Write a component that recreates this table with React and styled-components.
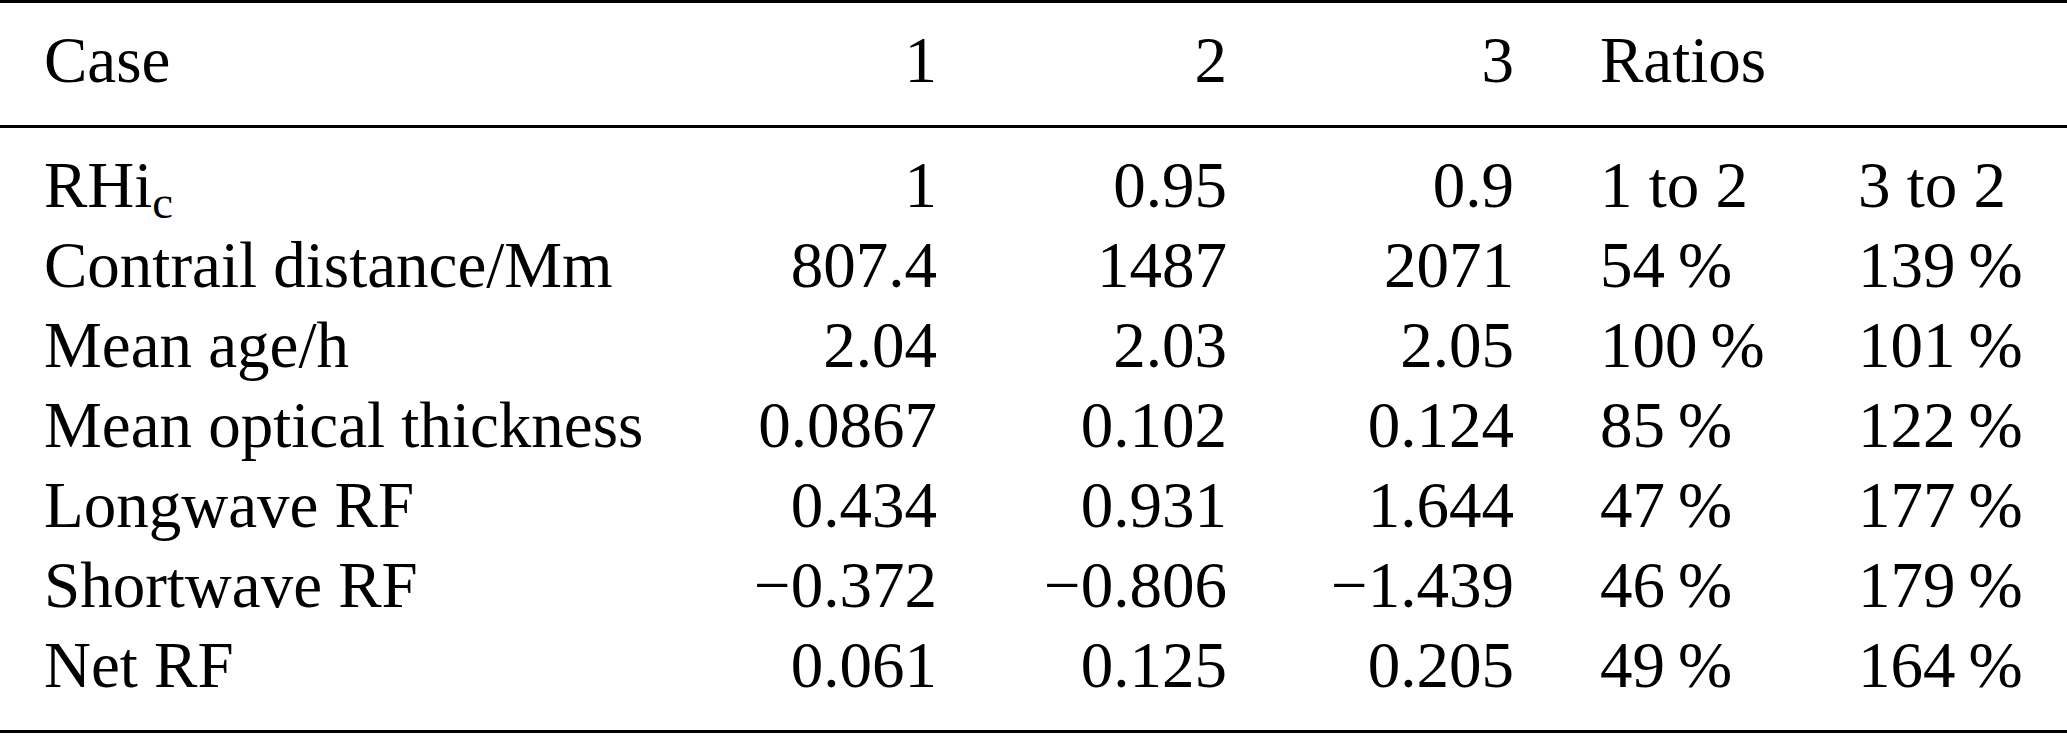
import React from "react";
import styled, { createGlobalStyle } from "styled-components";

const serif = `"Liberation Serif", "Times New Roman", serif`;

const GlobalStyle = createGlobalStyle`
  html, body {
    margin: 0;
    padding: 0;
    background: #fff;
  }
`;

const Table = styled.div`
  width: 2067px;
  height: 737px;
  font-family: ${serif};
  font-size: 65px;
  line-height: 80px;
  color: #000;
`;

const Rule = styled.div`
  height: 3px;
  background: #000;
`;

const Section = styled.div`
  padding: ${props => props.$pad};
`;

const Row = styled.div`
  display: grid;
  grid-template-columns: 700px 193px 290px 287px 344px 1fr;
  padding-left: 44px;
  white-space: nowrap;
`;

const Cell = styled.div`
  text-align: ${props => (props.$left ? "left" : "right")};
  padding-left: ${props => (props.$gap ? "86px" : "0")};
`;

const Sub = styled.span`
  font-size: 0.72em;
  vertical-align: -0.24em;
  line-height: 0;
`;

const pct = v => `${v}\u2009%`;

const rows = [
  [<>RHi<Sub>c</Sub></>, "1", "0.95", "0.9", "1 to 2", "3 to 2"],
  ["Contrail distance/Mm", "807.4", "1487", "2071", pct(54), pct(139)],
  ["Mean age/h", "2.04", "2.03", "2.05", pct(100), pct(101)],
  ["Mean optical thickness", "0.0867", "0.102", "0.124", pct(85), pct(122)],
  ["Longwave RF", "0.434", "0.931", "1.644", pct(47), pct(177)],
  ["Shortwave RF", "\u22120.372", "\u22120.806", "\u22121.439", pct(46), pct(179)],
  ["Net RF", "0.061", "0.125", "0.205", pct(49), pct(164)]
];

const DataRow = ({ cells }) => (
  <Row>
    <Cell $left>{cells[0]}</Cell>
    <Cell>{cells[1]}</Cell>
    <Cell>{cells[2]}</Cell>
    <Cell>{cells[3]}</Cell>
    <Cell $left $gap>{cells[4]}</Cell>
    <Cell $left>{cells[5]}</Cell>
  </Row>
);

export default function App() {
  return (
    <>
      <GlobalStyle />
      <Table>
        <Rule />
        <Section $pad="17px 0 25px">
          <DataRow cells={["Case", "1", "2", "3", "Ratios", ""]} />
        </Section>
        <Rule />
        <Section $pad="17px 0 25px">
          {rows.map((r, i) => (
            <DataRow key={i} cells={r} />
          ))}
        </Section>
        <Rule />
      </Table>
    </>
  );
}
